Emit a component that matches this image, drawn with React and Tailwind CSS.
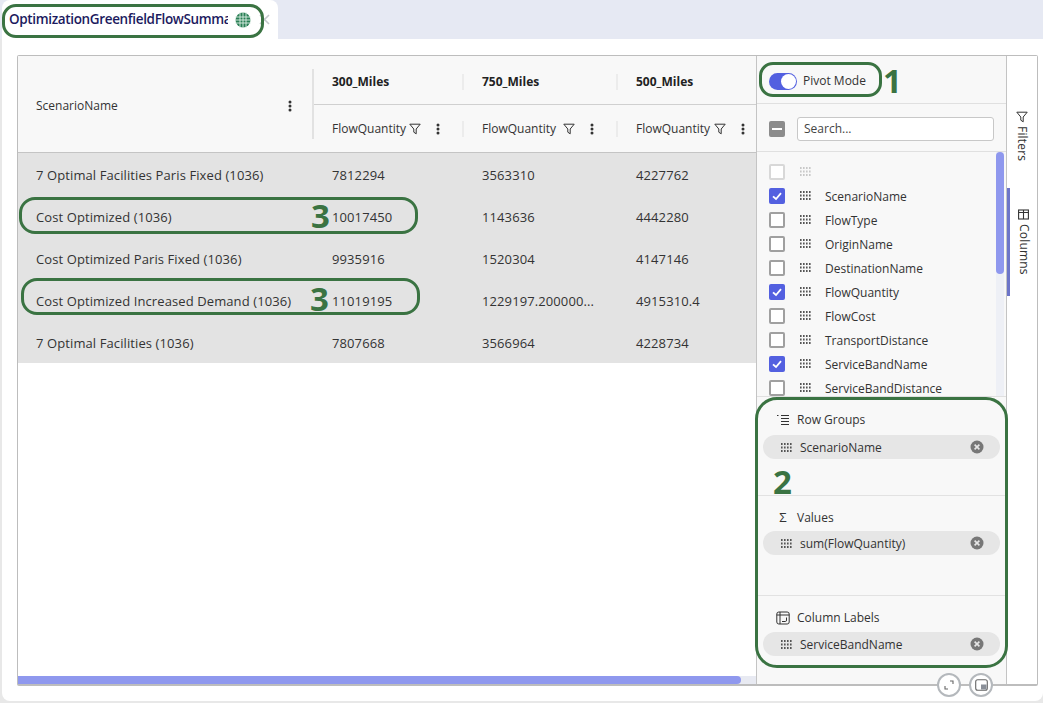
const FONT = "font-['Open_Sans','Noto_Sans',sans-serif]"

const rows = [
  { name: '7 Optimal Facilities Paris Fixed (1036)', a: '7812294', b: '3563310', c: '4227762' },
  { name: 'Cost Optimized (1036)', a: '10017450', b: '1143636', c: '4442280' },
  { name: 'Cost Optimized Paris Fixed (1036)', a: '9935916', b: '1520304', c: '4147146' },
  { name: 'Cost Optimized Increased Demand (1036)', a: '11019195', b: '1229197.200000...', c: '4915310.4' },
  { name: '7 Optimal Facilities (1036)', a: '7807668', b: '3566964', c: '4228734' },
]

const columns = [
  { name: '', checked: false, faded: true },
  { name: 'ScenarioName', checked: true },
  { name: 'FlowType' },
  { name: 'OriginName' },
  { name: 'DestinationName' },
  { name: 'FlowQuantity', checked: true },
  { name: 'FlowCost' },
  { name: 'TransportDistance' },
  { name: 'ServiceBandName', checked: true },
  { name: 'ServiceBandDistance' },
]

function Grip({ faded }) {
  const dots = []
  for (let y = 0; y < 3; y++) {
    for (let x = 0; x < 4; x++) {
      dots.push(<rect key={`${x}-${y}`} x={x * 3} y={y * 3.5} width="1.6" height="2" />)
    }
  }
  return (
    <svg width="11" height="9" viewBox="0 0 11 9" className={faded ? 'fill-[#c8c8c8]' : 'fill-[#555]'}>
      {dots}
    </svg>
  )
}

function Dots() {
  return (
    <svg width="4" height="12" viewBox="0 0 4 12" className="fill-[#333]">
      <circle cx="2" cy="2" r="1.5" />
      <circle cx="2" cy="6" r="1.5" />
      <circle cx="2" cy="10" r="1.5" />
    </svg>
  )
}

function Funnel({ className = '' }) {
  return (
    <svg width="12" height="12" viewBox="0 0 12 12" fill="none" stroke="#333" strokeWidth="1" className={className}>
      <path d="M0.8 1.2 H11.2 L7.2 6 V10.8 L4.8 9.2 V6 Z" />
    </svg>
  )
}

function Globe() {
  return (
    <svg width="16" height="16" viewBox="0 0 16 16">
      <circle cx="8" cy="8" r="7.5" fill="#2a7f55" />
      <path d="M0 5 H16 M0 8 H16 M0 11 H16 M5 0 V16 M8 0 V16 M11 0 V16" stroke="#dff0e6" strokeWidth="0.9" />
    </svg>
  )
}

function CheckBox({ checked, faded }) {
  if (checked) {
    return (
      <span className="-mt-[2px] flex h-4 w-4 items-center justify-center rounded-[2px] bg-[#5360e0]">
        <svg width="12" height="12" viewBox="0 0 12 12" fill="none" stroke="#fff" strokeWidth="1.8">
          <path d="M2 6.3 L5 9 L10 3.2" />
        </svg>
      </span>
    )
  }
  return <span className={`-mt-[2px] h-4 w-4 rounded-[2px] border-2 bg-white ${faded ? 'border-[#d8d8d8]' : 'border-[#a0a0a0]'}`} />
}

function Pill({ label }) {
  return (
    <div className="mx-[6px] flex h-6 items-center rounded-full bg-[#e6e6e6] pl-[18px] pr-4 text-xs text-[#333]">
      <Grip />
      <span className="ml-2 flex-1 pt-[2px]">{label}</span>
      <svg width="14" height="14" viewBox="0 0 14 14">
        <circle cx="7" cy="7" r="6.5" fill="#777" />
        <path d="M4.6 4.6 L9.4 9.4 M9.4 4.6 L4.6 9.4" stroke="#e6e6e6" strokeWidth="1.6" />
      </svg>
    </div>
  )
}

function DropZone({ icon, title, label, heightClass, titleClass, border }) {
  return (
    <div className={`${heightClass} ${border ? 'border-b border-[#e2e2e2]' : ''}`}>
      <div className={`flex items-center gap-[7px] pl-[19px] pt-[8px] text-xs text-[#333] ${titleClass}`}>
        {icon}
        <span>{title}</span>
      </div>
      <Pill label={label} />
    </div>
  )
}

function Oval({ className }) {
  return <div className={`pointer-events-none absolute border-[3px] border-[#3a7342] ${className}`} />
}

function Mark({ className, children }) {
  return (
    <span className={`pointer-events-none absolute text-[33px] font-bold leading-none text-[#3a7342] ${className}`}>
      {children}
    </span>
  )
}

export default function App() {
  return (
    <div className={`${FONT} relative h-[703px] w-[1043px] overflow-hidden bg-[#e8e8e8]`}>
      <div className="flex h-[39px] bg-[#e6e9f3] pl-[2px]">
        <div className="flex h-[39px] w-[276px] items-center rounded-t-lg bg-white pl-[7px]">
          <span className="w-[219px] overflow-hidden whitespace-nowrap text-[13.5px] font-semibold tracking-[-0.35px] text-[#1c1a5e]">
            OptimizationGreenfieldFlowSummary
          </span>
          <span className="ml-[7px]"><Globe /></span>
          <svg width="11" height="11" viewBox="0 0 11 11" stroke="#c4c8cc" strokeWidth="1.6" className="ml-[8px]">
            <path d="M1 1 L10 10 M10 1 L1 10" />
          </svg>
        </div>
      </div>

      <div className="ml-[2px] h-[662px] rounded-b-lg bg-white pl-[15px] pr-[5px] pt-4">
        <div className="flex h-[631px] rounded-[2px] border border-b-2 border-[#bdbdbd]">
          {/* grid */}
          <div className="relative flex w-[738px] flex-col">
            <div className="flex h-[97px] border-b border-[#c4c4c4] bg-[#f8f8f8]">
              <div className="flex w-[294px] items-center justify-between pl-[18px] pr-5 pt-[3px] text-xs text-[#333]">
                <span>ScenarioName</span>
                <Dots />
              </div>
              <div className="relative flex flex-1 flex-col">
                <span className="absolute left-0 top-[13px] h-[70px] w-[2px] bg-[#e2e2e2]" />
                <div className="flex h-[49px] items-center border-b border-[#d0d0d0] pt-[3px] text-xs font-bold text-[#222]">
                  <div className="w-[150px] pl-5">300_Miles</div>
                  <div className="w-[154px] border-l-2 border-[#ececec] pl-[18px]">750_Miles</div>
                  <div className="border-l-2 border-[#ececec] pl-[18px]">500_Miles</div>
                </div>
                <div className="flex flex-1 items-center pt-[1px] text-xs text-[#333]">
                  <div className="flex w-[150px] items-center pl-5">
                    <span>FlowQuantity</span>
                    <Funnel className="ml-[3px]" />
                    <span className="ml-[15px]"><Dots /></span>
                  </div>
                  <div className="flex w-[154px] items-center border-l-2 border-[#ececec] pl-[18px]">
                    <span>FlowQuantity</span>
                    <Funnel className="ml-[7px]" />
                    <span className="ml-[15px]"><Dots /></span>
                  </div>
                  <div className="flex items-center border-l-2 border-[#ececec] pl-[18px]">
                    <span>FlowQuantity</span>
                    <Funnel className="ml-1" />
                    <span className="ml-[15px]"><Dots /></span>
                  </div>
                </div>
              </div>
            </div>

            {rows.map(row => (
              <div key={row.name} className="flex h-[42px] items-center bg-[#e3e3e3] pt-[3px] text-[13px] tracking-[0.1px] text-[#333]">
                <div className="w-[314px] whitespace-nowrap pl-[18px]">{row.name}</div>
                <div className="w-[150px]">{row.a}</div>
                <div className="w-[154px]">{row.b}</div>
                <div>{row.c}</div>
              </div>
            ))}

            <div className="flex-1" />
            <div className="flex h-2 bg-[#e8eaf2]">
              <div className="h-2 w-[723px] rounded-r-full bg-[#8f98ee]" />
            </div>
          </div>

          {/* column tool panel */}
          <div className="flex w-[251px] flex-col border-x border-[#c4c4c4] bg-[#f8f8f8]">
            <div className="flex h-[48px] items-center border-b border-[#e0e0e0] pl-[12px] pt-[3px] text-xs text-[#333]">
              <span className="flex h-[17px] w-7 items-center justify-end rounded-full bg-[#5360e0] pr-[1px]">
                <span className="h-[15px] w-[15px] rounded-full bg-white" />
              </span>
              <span className="ml-[6px]">Pivot Mode</span>
            </div>
            <div className="flex h-[48px] items-center border-b border-[#e0e0e0] pl-[12px] pr-[12px] pt-[2px]">
              <span className="flex h-4 w-4 items-center justify-center rounded-[2px] bg-[#8c8c8c]">
                <span className="h-[2px] w-[10px] bg-white" />
              </span>
              <div className="ml-[12px] flex h-6 flex-1 items-center rounded-[3px] border border-[#c8c8c8] bg-white pl-[6px] text-xs text-[#444]">
                Search...
              </div>
            </div>
            <div className="relative h-[245px] overflow-hidden border-b border-[#e0e0e0] pl-[12px] pt-[9px]">
              {columns.map((col, i) => (
                <div key={i} className="flex h-6 items-center text-xs text-[#333]">
                  <CheckBox checked={col.checked} faded={col.faded} />
                  <span className="-mt-[3px] ml-[15px]"><Grip faded={col.faded} /></span>
                  <span className="ml-[14px]">{col.name}</span>
                </div>
              ))}
              <div className="absolute right-[2px] top-0 h-full w-2 bg-[#eef0f6]">
                <div className="h-[122px] w-2 rounded-full bg-[#8f98ee]" />
              </div>
            </div>
            <DropZone
              heightClass="h-[99px]"
              titleClass="h-[38px]"
              border
              title="Row Groups"
              label="ScenarioName"
              icon={
                <svg width="14" height="13" viewBox="0 0 14 13" stroke="#333" strokeWidth="1" fill="none">
                  <path d="M1 1.5 H2.5 M5 1.5 H13 M5 4.5 H13 M5 7.5 H13 M5 10.5 H13" />
                </svg>
              }
            />
            <DropZone
              heightClass="h-[100px]"
              titleClass="h-[35px]"
              border
              title="Values"
              label="sum(FlowQuantity)"
              icon={<span className="flex w-[14px] justify-center text-[13px] leading-none text-[#333]">Σ</span>}
            />
            <DropZone
              heightClass="flex-1"
              titleClass="h-9"
              title="Column Labels"
              label="ServiceBandName"
              icon={
                <svg width="14" height="14" viewBox="0 0 14 14" stroke="#333" strokeWidth="1" fill="none">
                  <rect x="0.8" y="1" width="12.4" height="12" rx="2" />
                  <path d="M0.8 4 H13.2 M4 1 V13 M6 10.5 H9.5 Q10.5 10.5 10.5 9 V6.5" />
                </svg>
              }
            />
          </div>

          {/* side bar */}
          <div className="flex-1 bg-white">
            <div className="flex h-[132px] flex-col items-center pt-[55px]">
              <Funnel />
              <span className="mt-[3px] text-xs leading-none tracking-[0.2px] text-[#333] [writing-mode:vertical-rl]">Filters</span>
            </div>
            <div className="flex h-[108px] flex-col items-center border-l-[3px] border-[#6d75c8] pt-[21px]">
              <svg width="11" height="11" viewBox="0 0 11 11" stroke="#333" strokeWidth="1.1" fill="none">
                <rect x="0.6" y="1" width="9.8" height="9" />
                <path d="M0.6 3.5 H10.4 M5.5 1 V10" />
              </svg>
              <span className="mt-[4px] text-xs leading-none tracking-[0.2px] text-[#333] [writing-mode:vertical-rl]">Columns</span>
            </div>
          </div>
        </div>
      </div>

      {/* callouts drawn over the screenshot */}
      <Oval className="left-[2px] top-[4px] h-[34px] w-[262px] rounded-[14px]" />
      <Oval className="left-[19px] top-[197px] h-[37px] w-[399px] rounded-[16px]" />
      <Oval className="left-[21px] top-[278px] h-[37px] w-[399px] rounded-[16px]" />
      <Oval className="left-[759px] top-[62px] h-[35px] w-[123px] rounded-[14px]" />
      <Oval className="left-[755px] top-[397px] h-[271px] w-[253px] rounded-[22px]" />
      <Mark className="left-[311px] top-[199px]">3</Mark>
      <Mark className="left-[310px] top-[282px]">3</Mark>
      <Mark className="left-[883px] top-[64px]">1</Mark>
      <Mark className="left-[773px] top-[465px]">2</Mark>

      {/* round buttons over the bottom edge */}
      <div className="absolute left-[937px] top-[673px] flex gap-2">
        <span className="flex h-6 w-6 items-center justify-center rounded-full border-2 border-[#b4b8bc] bg-white">
          <svg width="10" height="10" viewBox="0 0 10 10" fill="none" stroke="#666" strokeWidth="1.1">
            <path d="M6 1 H9 V4 M4 9 H1 V6" />
          </svg>
        </span>
        <span className="flex h-6 w-6 items-center justify-center rounded-full border-2 border-[#b4b8bc] bg-white">
          <svg width="13" height="12" viewBox="0 0 13 12">
            <rect x="0.7" y="0.7" width="11.6" height="10.6" rx="2" fill="none" stroke="#666" strokeWidth="1.1" />
            <rect x="6" y="5.5" width="5.5" height="5" fill="#8a8f98" />
          </svg>
        </span>
      </div>
    </div>
  )
}
